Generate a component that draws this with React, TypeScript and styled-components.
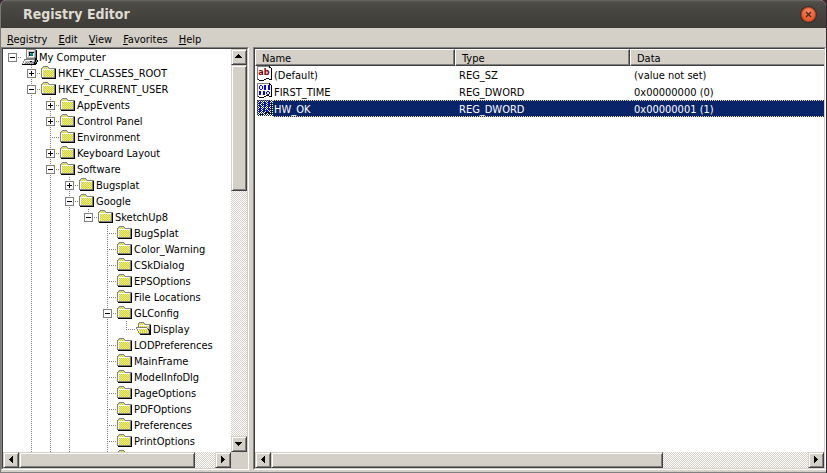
import React from 'react';
import styled, { createGlobalStyle, css } from 'styled-components';

const FACE = '#d4d0c8';
const SHADOW = '#808080';
const DARK = '#404040';
const checker = `repeating-conic-gradient(#ffffff 0 25%, ${FACE} 0 50%) 0 0 / 2px 2px`;

const GlobalStyle = createGlobalStyle`
  *, *::before, *::after { box-sizing: border-box; }
  body {
    margin: 0;
    background: #3a2434;
    color: #000;
    font: 11px/16px 'DejaVu Sans Condensed', 'DejaVu Sans', sans-serif;
  }
  button { font: inherit; color: inherit; padding: 0; margin: 0; }
`;

/* ---------- window frame ---------- */

const Window = styled.main`
  display: flex;
  flex-direction: column;
  height: 100vh;
  margin-right: 1px;
  overflow: hidden;
  border-radius: 6px 6px 0 0;
  background: ${FACE};
  border-left: 1px solid #7b7872;
  border-bottom: 1px solid ${SHADOW};
`;

const TitleBar = styled.header`
  display: flex;
  flex: none;
  align-items: center;
  justify-content: space-between;
  height: 28px;
  margin-left: -1px;
  padding: 0 10px 0 23px;
  background: linear-gradient(#55534d, #4b4a44 12%, #3c3b37);
  border-top: 1px solid #66645e;
`;

const Title = styled.h1`
  margin: 0;
  padding-bottom: 2px;
  font-size: 14px;
  line-height: 20px;
  font-weight: bold;
  color: #dfdbd2;
`;

const CloseButton = styled.button`
  display: grid;
  place-items: center;
  width: 15px;
  height: 15px;
  border: 1px solid #c8441c;
  border-radius: 50%;
  background: radial-gradient(circle at 50% 25%, #f8875f, #ee5a2b 70%);
  box-shadow: 0 0 0 1px #33322e;
`;

const MenuBar = styled.nav`
  display: flex;
  flex: none;
  gap: 11px;
  height: 19px;
  padding: 4px 6px 0;
`;

const MenuItem = styled.button`
  border: 0;
  background: none;
  height: 15px;
  line-height: 15px;
  &::first-letter { text-decoration: underline; }
`;

const Panes = styled.div`
  display: flex;
  flex: 1;
  min-height: 0;
  gap: 4px;
  margin-bottom: 2px;
`;

const Pane = styled.section<{ $tree?: boolean }>`
  display: grid;
  grid-template-rows: minmax(0, 1fr);
  grid-template-columns: minmax(0, 1fr);
  flex: ${p => (p.$tree ? '0 0 248px' : '1 1 0')};
  min-width: 0;
  border: 1px solid;
  border-color: ${SHADOW} #ffffff #ffffff ${SHADOW};
  background: ${FACE};
`;

const PaneInner = styled.div<{ $tree?: boolean }>`
  display: grid;
  grid-template-columns: minmax(0, 1fr) ${p => (p.$tree ? '16px' : '')};
  grid-template-rows: minmax(0, 1fr) 16px;
  border: 1px solid;
  border-color: ${DARK} ${FACE} ${FACE} ${DARK};
`;

const Content = styled.div`
  overflow: hidden;
  background: #ffffff;
`;

/* ---------- scrollbars ---------- */

const raised = css`
  border: 1px solid;
  border-color: ${FACE} ${DARK} ${DARK} ${FACE};
  background: ${FACE};
  box-shadow: inset 1px 1px 0 #ffffff, inset -1px -1px 0 ${SHADOW};
`;

const Scrollbar = styled.div<{ $vertical?: boolean }>`
  display: flex;
  flex-direction: ${p => (p.$vertical ? 'column' : 'row')};
  min-width: 0;
  min-height: 0;
  background: ${checker};
`;

const Arrow = styled.button`
  ${raised}
  display: grid;
  place-items: center;
  flex: none;
  width: 16px;
  height: 16px;
`;

const Track = styled.div<{ $vertical?: boolean }>`
  display: flex;
  flex: 1;
  flex-direction: ${p => (p.$vertical ? 'column' : 'row')};
`;

const Thumb = styled.div<{ $share: number }>`
  ${raised}
  flex: 0 0 ${p => p.$share}%;
`;

const arrowPaths = {
  left: 'M5 0h1v7h-1zM4 1h1v5h-1zM3 2h1v3h-1zM2 3h1v1h-1z',
  right: 'M2 0h1v7h-1zM3 1h1v5h-1zM4 2h1v3h-1zM5 3h1v1h-1z',
  up: 'M0 5h7v-1h-7zM1 4h5v-1h-5zM2 3h3v-1h-3zM3 2h1v-1h-1z',
  down: 'M0 2h7v1h-7zM1 3h5v1h-5zM2 4h3v1h-3zM3 5h1v1h-1z',
};

function ArrowButton({ dir }: { dir: keyof typeof arrowPaths }) {
  return (
    <Arrow type="button" aria-label={`Scroll ${dir}`}>
      <svg width="8" height="8" viewBox="0 0 8 8" shapeRendering="crispEdges">
        <path d={arrowPaths[dir]} />
      </svg>
    </Arrow>
  );
}

function Bar({ vertical, share }: { vertical?: boolean; share: number }) {
  return (
    <Scrollbar $vertical={vertical}>
      <ArrowButton dir={vertical ? 'up' : 'left'} />
      <Track $vertical={vertical}>
        <Thumb $share={share} />
      </Track>
      <ArrowButton dir={vertical ? 'down' : 'right'} />
    </Scrollbar>
  );
}

/* ---------- pixel icons ---------- */

const palette: Record<string, string> = {
  g: '#808080',
  w: '#ffffff',
  y: '#ffff00',
  l: '#c0c0c0',
  k: '#000000',
  t: '#008080',
  c: '#00ffff',
};

const folderMap = [
  '................',
  '..ggggg.........',
  '.glylylg........',
  'glylylylggggggg.',
  'gwwwwwwwwwwwwgk.',
  'gwlylylylylylgk.',
  'gwylylylylylygk.',
  'gwlylylylylylgk.',
  'gwylylylylylygk.',
  'gwlylylylylylgk.',
  'gwylylylylylygk.',
  'gwlylylylylylgk.',
  'ggggggggggggggk.',
  '.kkkkkkkkkkkkkk.',
];

const openFolderMap = [
  '................',
  '...ggggg........',
  '..glylylg.......',
  '..gylylylgggggg.',
  '..gwwwwwwwwwwgk.',
  '..gylylylylylgk.',
  'gggggggggggylgk.',
  'gwwwwwwwwwwglgk.',
  '.gwlylylylylkgk.',
  '.gwylylylylygkk.',
  '..gwlylylylylkk.',
  '..gylylylylylkk.',
  '...ggggggggggkk.',
  '....kkkkkkkkkkk.',
];

const computerMap = [
  '....gggggggggg..',
  '....gwwwwwwwlgk.',
  '....gwlllllllgk.',
  '....gwlkkkkklgk.',
  '....gwlkcttwlgk.',
  '....gwlktttwlgk.',
  '....gwlktttwlgk.',
  '....gwlwwwwwlgk.',
  '....glllllllggk.',
  '....gggggggggkk.',
  '..gggggggggggkk.',
  '..gwwwwwwwwwgkgk',
  '.gwlllllkkllgkgk',
  '.gwlglglglggkgk.',
  'gwlglglglglgkkk.',
  'kkkkkkkkkkkkkk..',
];

const Icon = styled.svg`
  display: block;
  flex: none;
  width: 16px;
  height: 16px;
`;

function PixelIcon({ map }: { map: string[] }) {
  return (
    <Icon viewBox="0 0 16 16" shapeRendering="crispEdges" aria-hidden="true">
      {map.flatMap((row, y) =>
        [...row].map((ch, x) =>
          palette[ch] ? <rect key={`${x},${y}`} x={x} y={y} width="1" height="1" fill={palette[ch]} /> : null,
        ),
      )}
    </Icon>
  );
}

function ValueIcon({ kind, selected }: { kind: 'string' | 'binary'; selected?: boolean }) {
  return (
    <Icon viewBox="0 0 16 16" aria-hidden="true">
      <defs>
        <pattern id="dither" width="2" height="2" patternUnits="userSpaceOnUse">
          <path d="M0 0h1v1h-1zM1 1h1v1h-1z" fill="#0a246a" shapeRendering="crispEdges" />
        </pattern>
      </defs>
      <g shapeRendering="crispEdges">
        <path d="M1 0h11v2h3v12h-3v-1h-3v1h-2v1h-5v-1h-1z" fill="#fff" />
        <path d="M0 0h12v1h-11v13h-1z" fill="#808080" />
        <path
          d="M12 0h1v1h1v1h-2zM14 2h1v12h-1zM12 13h2v1h-2zM9 12h3v1h-3zM7 13h2v1h-2zM1 13h1v1h-1zM2 14h5v1h-5z"
          fill="#000"
        />
      </g>
      {kind === 'string' ? (
        <text x="7" y="9" textAnchor="middle" fontFamily="DejaVu Sans Condensed" fontWeight="bold" fontSize="9" fill="#800000">
          ab
        </text>
      ) : (
        <path
          shapeRendering="crispEdges"
          fill="#0000ff"
          fillRule="evenodd"
          d="M3 2h2v1h1v3h-1v1h-2v-1h-1v-3h1zM3 3h2v3h-2z
             M7 2h2v5h-2zM11 2h2v5h-2z
             M2 8h2v4h-2zM6 8h2v4h-2z
             M10 8h2v1h1v2h-1v1h-2v-1h-1v-2h1zM10 9h2v2h-2z"
        />
      )}
      {selected && <rect width="16" height="16" fill="url(#dither)" />}
    </Icon>
  );
}

/* ---------- key tree ---------- */

type Key = {
  label: string;
  level: number;
  guides?: number[];
  box?: '+' | '-';
  last?: boolean;
  icon?: 'computer' | 'open';
};

const keys: Key[] = [
  { label: 'My Computer', level: 0, box: '-', icon: 'computer' },
  { label: 'HKEY_CLASSES_ROOT', level: 1, box: '+' },
  { label: 'HKEY_CURRENT_USER', level: 1, box: '-' },
  { label: 'AppEvents', level: 2, guides: [1], box: '+' },
  { label: 'Control Panel', level: 2, guides: [1], box: '+' },
  { label: 'Environment', level: 2, guides: [1] },
  { label: 'Keyboard Layout', level: 2, guides: [1], box: '+' },
  { label: 'Software', level: 2, guides: [1], box: '-' },
  { label: 'Bugsplat', level: 3, guides: [1, 2], box: '+' },
  { label: 'Google', level: 3, guides: [1, 2], box: '-' },
  { label: 'SketchUp8', level: 4, guides: [1, 2, 3], box: '-', last: true },
  ...['BugSplat', 'Color_Warning', 'CSkDialog', 'EPSOptions', 'File Locations'].map(label => ({
    label,
    level: 5,
    guides: [1, 2, 3],
  })),
  { label: 'GLConfig', level: 5, guides: [1, 2, 3], box: '-' },
  { label: 'Display', level: 6, guides: [1, 2, 3, 5], last: true, icon: 'open' },
  ...['LODPreferences', 'MainFrame', 'ModelInfoDlg', 'PageOptions', 'PDFOptions', 'Preferences', 'PrintOptions', ''].map(
    label => ({ label, level: 5, guides: [1, 2, 3] }),
  ),
];

const Tree = styled.ul`
  margin: 0;
  padding: 0;
  list-style: none;
`;

const TreeRow = styled.li`
  display: flex;
  align-items: center;
  height: 16px;
  white-space: nowrap;
`;

const dotsDown = `repeating-linear-gradient(${SHADOW} 0 1px, transparent 1px 2px)`;
const dotsAcross = `repeating-linear-gradient(90deg, ${SHADOW} 0 1px, transparent 1px 2px)`;

const Guide = styled.span<{ $line?: boolean }>`
  flex: none;
  width: 19px;
  height: 16px;
  background: ${p => (p.$line ? `${dotsDown} 9px 0 / 1px 16px no-repeat` : 'none')};
`;

const Branch = styled.span<{ $root?: boolean; $last?: boolean }>`
  display: flex;
  flex: none;
  width: 19px;
  height: 16px;
  padding: 4px 0 0 5px;
  background:
    ${dotsAcross} 9px 8px / 10px 1px no-repeat
    ${p => (p.$root ? '' : `, ${dotsDown} 9px 0 / 1px ${p.$last ? '8px' : '16px'} no-repeat`)};
`;

const Expander = styled.button<{ $open: boolean }>`
  width: 9px;
  height: 9px;
  border: 1px solid ${SHADOW};
  background:
    linear-gradient(#000, #000) 1px 3px / 5px 1px no-repeat,
    ${p => (p.$open ? '' : 'linear-gradient(#000, #000) 3px 1px / 1px 5px no-repeat,')}
    linear-gradient(#fff, #fff);
`;

const KeyLabel = styled.span`
  padding: 2px 0 0 1px;
  line-height: 16px;
`;

function TreeKey({ item }: { item: Key }) {
  const { label, level, guides = [], box, last, icon } = item;
  const map = icon === 'computer' ? computerMap : icon === 'open' ? openFolderMap : folderMap;
  return (
    <TreeRow role="treeitem" aria-level={level + 1} aria-expanded={box ? box === '-' : undefined}>
      {Array.from({ length: level }, (_, i) => (
        <Guide key={i} $line={guides.includes(i)} />
      ))}
      <Branch $root={level === 0} $last={last}>
        {box && <Expander type="button" $open={box === '-'} aria-label={`Toggle ${label}`} />}
      </Branch>
      <PixelIcon map={map} />
      <KeyLabel>{label}</KeyLabel>
    </TreeRow>
  );
}

/* ---------- value list ---------- */

type Value = { name: string; type: string; data: string; kind: 'string' | 'binary'; selected?: boolean };

const values: Value[] = [
  { name: '(Default)', type: 'REG_SZ', data: '(value not set)', kind: 'string' },
  { name: 'FIRST_TIME', type: 'REG_DWORD', data: '0x00000000 (0)', kind: 'binary' },
  { name: 'HW_OK', type: 'REG_DWORD', data: '0x00000001 (1)', kind: 'binary', selected: true },
];

const Table = styled.table`
  width: 100%;
  table-layout: fixed;
  border-collapse: separate;
  border-spacing: 0;
`;

const Col = styled.col<{ $width?: number }>`
  width: ${p => (p.$width ? `${p.$width}px` : 'auto')};
`;

const HeadCell = styled.th`
  height: 17px;
  padding: 2px 0 0 6px;
  border: 1px solid;
  border-color: #ffffff ${DARK} ${DARK} #ffffff;
  box-shadow: inset -1px -1px 0 ${SHADOW};
  background: ${FACE};
  font-weight: normal;
  line-height: 13px;
  text-align: left;
  &:last-child { border-right: 0; box-shadow: inset 0 -1px 0 ${SHADOW}; }
`;

const Cell = styled.td<{ $selected?: boolean }>`
  height: 17px;
  padding: 2px 0 0 4px;
  line-height: 15px;
  white-space: nowrap;
  ${p =>
    p.$selected &&
    css`
      color: #ffffff;
      background:
        repeating-linear-gradient(90deg, #f5db95 0 1px, #0a246a 1px 2px) 0 0 / 100% 1px no-repeat,
        repeating-linear-gradient(90deg, #f5db95 0 1px, #0a246a 1px 2px) 0 100% / 100% 1px no-repeat,
        #0a246a;
    `}
`;

const NameCell = styled(Cell)`
  padding: 0 0 0 18px;
  background-clip: content-box;
  background-origin: content-box;
`;

const NameRow = styled.div`
  display: flex;
  gap: 1px;
  height: 17px;
  margin-left: -16px;
`;

const ValueName = styled.span`
  padding-top: 2px;
  line-height: 15px;
`;

export default function App() {
  return (
    <>
      <GlobalStyle />
      <Window>
        <TitleBar>
          <Title>Registry Editor</Title>
          <CloseButton type="button" aria-label="Close">
            <svg width="7" height="7" viewBox="0 0 7 7">
              <path d="M1 1l5 5M6 1l-5 5" stroke="#3c2a22" strokeWidth="1.3" />
            </svg>
          </CloseButton>
        </TitleBar>
        <MenuBar>
          {['Registry', 'Edit', 'View', 'Favorites', 'Help'].map(m => (
            <MenuItem key={m} type="button">
              {m}
            </MenuItem>
          ))}
        </MenuBar>
        <Panes>
          <Pane $tree>
            <PaneInner $tree>
              <Content>
                <Tree role="tree">
                  {keys.map(k => (
                    <TreeKey key={k.label} item={k} />
                  ))}
                </Tree>
              </Content>
              <Bar vertical share={34} />
              <Bar share={90} />
            </PaneInner>
          </Pane>
          <Pane>
            <PaneInner>
              <Content>
                <Table>
                  <colgroup>
                    <Col $width={200} />
                    <Col $width={175} />
                    <Col />
                  </colgroup>
                  <thead>
                    <tr>
                      <HeadCell scope="col">Name</HeadCell>
                      <HeadCell scope="col">Type</HeadCell>
                      <HeadCell scope="col">Data</HeadCell>
                    </tr>
                  </thead>
                  <tbody>
                    {values.map(v => (
                      <tr key={v.name} aria-selected={!!v.selected}>
                        <NameCell $selected={v.selected}>
                          <NameRow>
                            <ValueIcon kind={v.kind} selected={v.selected} />
                            <ValueName>{v.name}</ValueName>
                          </NameRow>
                        </NameCell>
                        <Cell $selected={v.selected}>{v.type}</Cell>
                        <Cell $selected={v.selected}>{v.data}</Cell>
                      </tr>
                    ))}
                  </tbody>
                </Table>
              </Content>
              <Bar share={73} />
            </PaneInner>
          </Pane>
        </Panes>
      </Window>
    </>
  );
}
